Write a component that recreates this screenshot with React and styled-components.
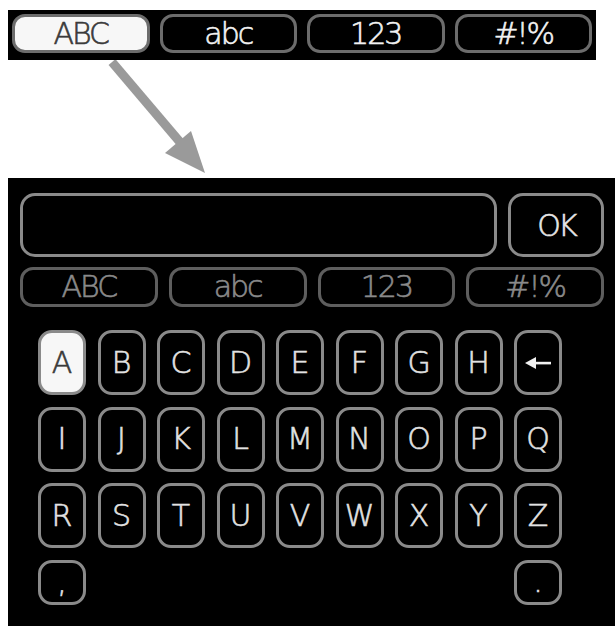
import styled, { createGlobalStyle } from 'styled-components'

const GlobalStyle = createGlobalStyle`
  html, body {
    margin: 0;
    padding: 0;
    background: #ffffff;
  }
  body {
    font-family: 'DejaVu Sans', 'Liberation Sans', sans-serif;
    font-stretch: condensed;
    font-weight: 300;
  }
`

const Page = styled.div`
  width: 615px;
  height: 626px;
  padding-top: 10px;
  box-sizing: border-box;
  overflow: hidden;
`

const TopBar = styled.div`
  margin-left: 8px;
  width: 588px;
  height: 50px;
  box-sizing: border-box;
  padding: 4px 4px 7px;
  background: #000;
  display: grid;
  grid-template-columns: repeat(4, 1fr);
  column-gap: 10px;
`

const ModeTab = styled.div`
  display: flex;
  align-items: center;
  justify-content: center;
  box-sizing: border-box;
  border: 3px solid ${(p) => (p.$dim ? '#5e5e5e' : '#6c6c6c')};
  border-radius: 13px;
  background: ${(p) => (p.$active ? '#f7f7f7' : '#000')};
  color: ${(p) => (p.$active ? '#3a3a3a' : p.$dim ? '#8a8a8a' : '#f2f2f2')};
  font-size: 30px;
  letter-spacing: -2px;
  line-height: 1;
  -webkit-text-stroke: 0.6px currentColor;
`

const ArrowArea = styled.svg`
  display: block;
  width: 615px;
  height: 118px;
`

const Panel = styled.div`
  margin-left: 8px;
  width: 607px;
  height: 448px;
  box-sizing: border-box;
  padding: 15px 11px 0 12px;
  background: #000;
`

const InputRow = styled.div`
  display: grid;
  grid-template-columns: 1fr 96px;
  column-gap: 11px;
  height: 64px;
`

const Field = styled.div`
  box-sizing: border-box;
  border: 3px solid #8a8a8a;
  border-radius: 15px;
`

const OkButton = styled.div`
  box-sizing: border-box;
  border: 3px solid #8a8a8a;
  border-radius: 15px;
  display: flex;
  align-items: center;
  justify-content: center;
  color: #e6e6e6;
  font-size: 30px;
  letter-spacing: -3px;
  -webkit-text-stroke: 0.6px currentColor;
`

const TabRow = styled.div`
  margin-top: 10px;
  height: 40px;
  display: grid;
  grid-template-columns: repeat(4, 1fr);
  column-gap: 11px;
`

const Keyboard = styled.div`
  margin: 23px 0 0 18px;
  width: 524px;
  display: grid;
  grid-template-columns: repeat(9, 48px);
  grid-auto-rows: 65px;
  column-gap: 11.5px;
  row-gap: 11.5px;
`

const Key = styled.div`
  box-sizing: border-box;
  height: ${(p) => (p.$short ? '45px' : '65px')};
  grid-column: ${(p) => p.$col || 'auto'};
  border: 3px solid #8a8a8a;
  border-radius: 14px;
  background: ${(p) => (p.$active ? '#f7f7f7' : '#000')};
  color: ${(p) => (p.$active ? '#3a3a3a' : '#e2e2e2')};
  display: flex;
  align-items: center;
  justify-content: center;
  font-size: 30px;
  line-height: 1;
  -webkit-text-stroke: 0.6px currentColor;
`

const BackArrow = () => (
  <svg width="26" height="14" viewBox="0 0 26 14">
    <polygon points="0,7 11,1 11,13" fill="#f0f0f0" />
    <rect x="9" y="5.8" width="17" height="2.6" fill="#f0f0f0" />
  </svg>
)

const rows = [
  ['A', 'B', 'C', 'D', 'E', 'F', 'G', 'H', 'back'],
  ['I', 'J', 'K', 'L', 'M', 'N', 'O', 'P', 'Q'],
  ['R', 'S', 'T', 'U', 'V', 'W', 'X', 'Y', 'Z'],
]

const modes = ['ABC', 'abc', '123', '#!%']

export default function App() {
  return (
    <>
      <GlobalStyle />
      <Page>
        <TopBar>
          {modes.map((m, i) => (
            <ModeTab key={m} $active={i === 0}>
              {m}
            </ModeTab>
          ))}
        </TopBar>

        <ArrowArea viewBox="0 60 615 118">
          <line x1="112" y1="62" x2="185" y2="148" stroke="#9a9a9a" strokeWidth="9" />
          <polygon points="205,173 191,131 165,153" fill="#9a9a9a" />
        </ArrowArea>

        <Panel>
          <InputRow>
            <Field />
            <OkButton>OK</OkButton>
          </InputRow>
          <TabRow>
            {modes.map((m) => (
              <ModeTab key={m} $dim>
                {m}
              </ModeTab>
            ))}
          </TabRow>
          <Keyboard>
            {rows.flat().map((k) => (
              <Key key={k} $active={k === 'A'}>
                {k === 'back' ? <BackArrow /> : k}
              </Key>
            ))}
            <Key $short $col={1}>,</Key>
            <Key $short $col={9}>.</Key>
          </Keyboard>
        </Panel>
      </Page>
    </>
  )
}
